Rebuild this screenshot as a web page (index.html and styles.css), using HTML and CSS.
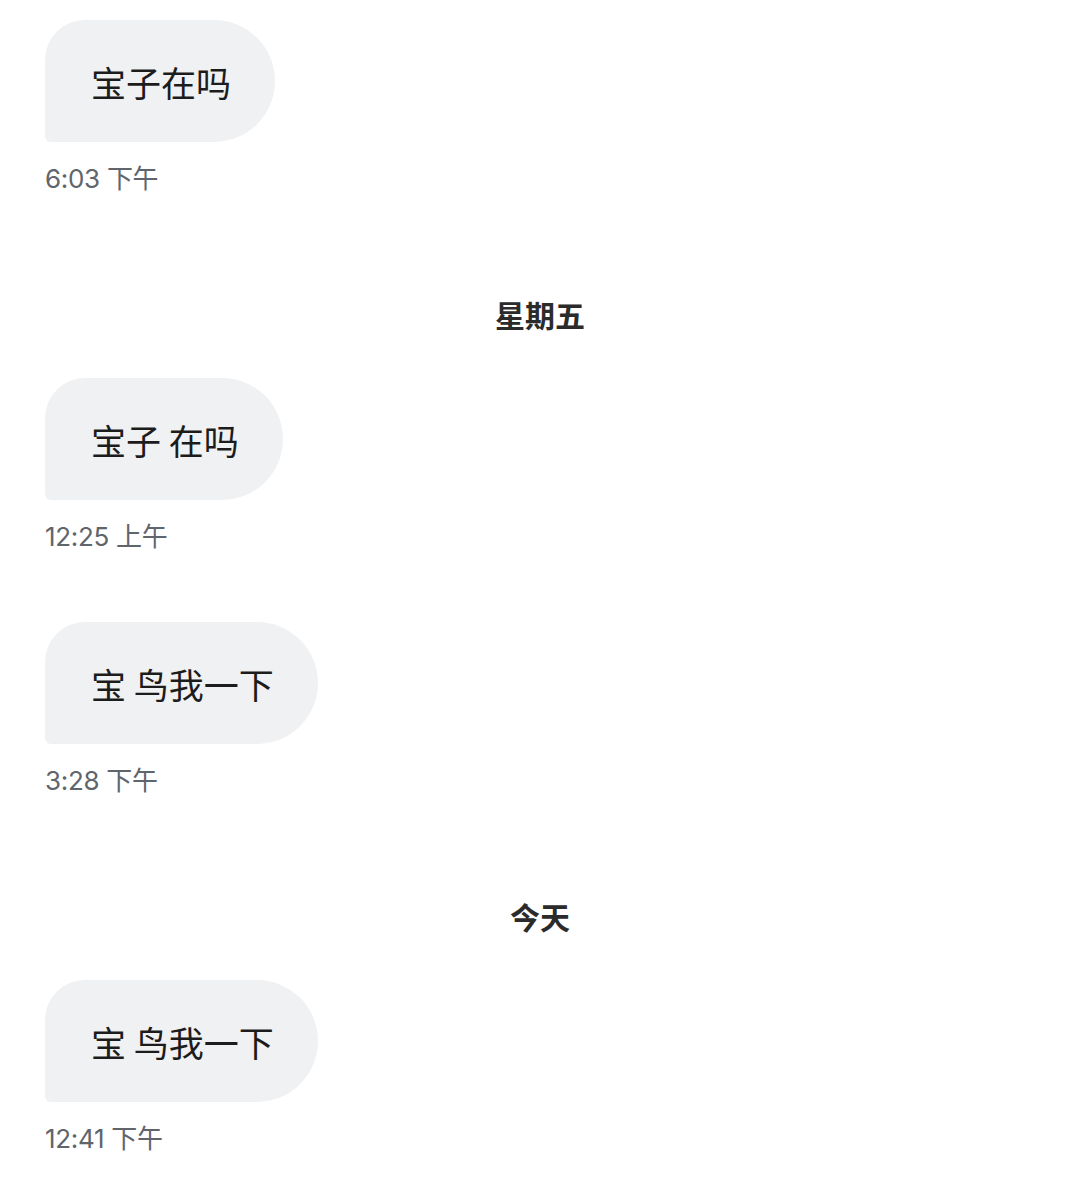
FILE: index.html
```html
<!DOCTYPE html>
<html lang="zh-CN">
<head>
    <meta charset="UTF-8">
    <meta name="viewport" content="width=device-width, initial-scale=1.0">
    <title>聊天记录</title>
    <link rel="stylesheet" href="styles.css">
</head>
<body>
    <div class="chat">
        <div class="msg">
            <div class="bubble">宝子在吗</div>
            <div class="time">6:03 下午</div>
        </div>

        <div class="day">星期五</div>

        <div class="msg">
            <div class="bubble">宝子 在吗</div>
            <div class="time">12:25 上午</div>
        </div>

        <div class="msg">
            <div class="bubble">宝 鸟我一下</div>
            <div class="time">3:28 下午</div>
        </div>

        <div class="day">今天</div>

        <div class="msg">
            <div class="bubble">宝 鸟我一下</div>
            <div class="time">12:41 下午</div>
        </div>
    </div>
</body>
</html>
```

FILE: styles.css
```css
body {
    margin: 0;
    background-color: #fff;
    font-family: "Noto Sans CJK SC", "Noto Sans", sans-serif;
}

.chat {
    display: flex;
    flex-direction: column;
    padding: 20px 45px 0;
}

.msg {
    display: flex;
    flex-direction: column;
    align-items: flex-start;
}

.msg + .msg {
    margin-top: 70px;
}

.bubble {
    display: flex;
    align-items: center;
    height: 122px;
    padding: 0 44px 0 46px;
    background-color: #f0f1f3;
    border-radius: 40px 61px 61px 6px;
    color: #1c1c1c;
    font-size: 35px;
    line-height: 1;
    white-space: pre;
}

.time {
    margin-top: 22px;
    color: #60656c;
    font-family: "Inter", "Noto Sans CJK SC", sans-serif;
    font-size: 26px;
    line-height: 30px;
    letter-spacing: -0.3px;
}

.day {
    margin: 100px 0 44px;
    text-align: center;
    color: #2b2b2b;
    font-size: 30px;
    font-weight: 700;
    line-height: 40px;
}
```
